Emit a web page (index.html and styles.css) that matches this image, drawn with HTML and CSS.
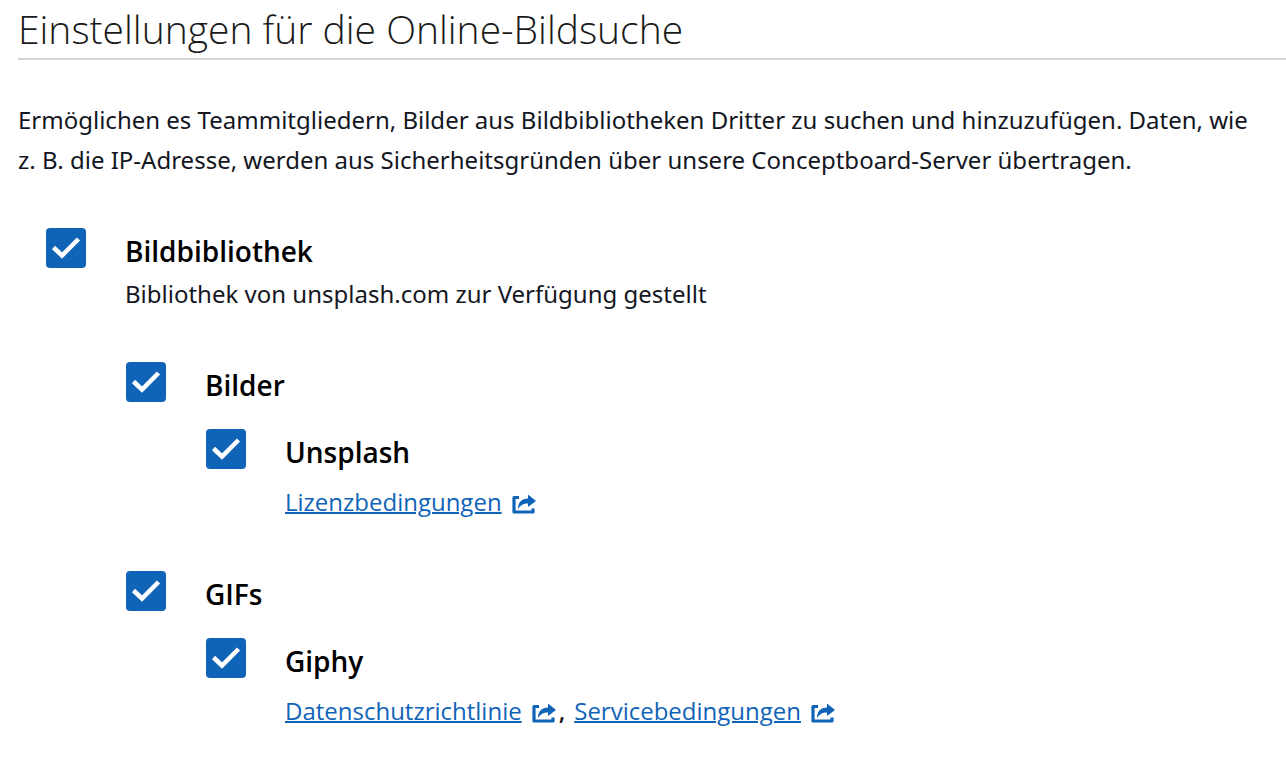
FILE: index.html
```html
<!DOCTYPE html>
<html lang="de">
<head>
<meta charset="utf-8">
<title>Einstellungen für die Online-Bildsuche</title>
<link rel="stylesheet" href="styles.css">
</head>
<body>
<svg class="sprite" aria-hidden="true">
  <symbol id="external" viewBox="0 0 24 20">
    <path d="M7 3.500H2V18H21V14.500" fill="none" stroke="currentColor" stroke-width="3.200" stroke-linejoin="round"/>
    <path d="M16 0.500L24 7L16 13V9.500C11 9.500 9 11 6 15C6 8 10 4.500 16 4.500Z" fill="currentColor"/>
  </symbol>
</svg>
<main class="settings">
  <h1 class="title">Einstellungen für die Online-Bildsuche</h1>
  <p class="intro">Ermöglichen es Teammitgliedern, Bilder aus Bildbibliotheken Dritter zu suchen und hinzuzufügen. Daten, wie z.&nbsp;B. die IP-Adresse, werden aus Sicherheitsgründen über unsere Conceptboard-Server übertragen.</p>
  <div class="options">
    <div class="option">
      <input class="check" type="checkbox" id="library" checked>
      <div class="content">
        <label class="label" for="library">Bildbibliothek</label>
        <p class="hint">Bibliothek von unsplash.com zur Verfügung gestellt</p>
      </div>
    </div>
    <div class="group">
      <div class="option">
        <input class="check" type="checkbox" id="images" checked>
        <label class="label" for="images">Bilder</label>
      </div>
      <div class="option nested">
        <input class="check" type="checkbox" id="unsplash" checked>
        <div class="content">
          <label class="label" for="unsplash">Unsplash</label>
          <p class="links"><a class="link" href="#">Lizenzbedingungen</a><svg class="icon" aria-hidden="true"><use href="#external"/></svg></p>
        </div>
      </div>
    </div>
    <div class="group">
      <div class="option">
        <input class="check" type="checkbox" id="gifs" checked>
        <label class="label" for="gifs">GIFs</label>
      </div>
      <div class="option nested">
        <input class="check" type="checkbox" id="giphy" checked>
        <div class="content">
          <label class="label" for="giphy">Giphy</label>
          <p class="links"><a class="link" href="#">Datenschutzrichtlinie</a><svg class="icon" aria-hidden="true"><use href="#external"/></svg><span class="comma">,</span><a class="link" href="#">Servicebedingungen</a><svg class="icon" aria-hidden="true"><use href="#external"/></svg></p>
        </div>
      </div>
    </div>
  </div>
</main>
</body>
</html>
```
FILE: styles.css
```css
body {
  margin: 0;
  background: #fff;
  color: #14171f;
  font-family: "Open Sans", sans-serif;
  font-size: 24px;
  font-weight: 400;
}
.sprite {
  display: none;
}
.settings {
  padding: 0 0 40px 18px;
}
.title {
  margin: 0;
  padding: 1px 0;
  border-bottom: 2px solid #d4d4d4;
  color: #1a1a1a;
  font-size: 39px;
  line-height: 56px;
  font-weight: 300;
}
.intro,
.hint {
  font-family: "Noto Sans", "Open Sans", sans-serif;
  font-weight: 450;
  line-height: 40px;
}
.intro {
  margin: 40px 18px 0 0;
}
.options {
  margin: 48px 0 0 28px;
}
.option {
  display: flex;
  align-items: flex-start;
  gap: 39px;
}
.check {
  appearance: none;
  flex: none;
  width: 40px;
  height: 40px;
  margin: 0;
  border-radius: 4px;
  background: #1064b8 url("data:image/svg+xml,%3Csvg xmlns='http://www.w3.org/2000/svg' viewBox='0 0 40 40'%3E%3Cpath d='M7.500 19.500L16 27.500L32.500 11' fill='none' stroke='white' stroke-width='4.500'/%3E%3C/svg%3E");
}
.label {
  display: block;
  padding: 3px 0 1px;
  color: #000;
  font-size: 28px;
  line-height: 40px;
  font-weight: 600;
}
.hint {
  margin: 2px 0 0;
}
.group {
  margin: 48px 0 0 80px;
}
.nested {
  margin: 23px 0 0 80px;
}
.links {
  display: flex;
  align-items: center;
  margin: 9px 0 1px;
  line-height: 40px;
}
.link {
  color: #1064b8;
  text-decoration-thickness: 2px;
}
.icon {
  width: 24px;
  height: 20px;
  margin-top: 4px;
  margin-left: 10px;
  color: #1064b8;
}
.comma {
  margin: 0 9px 0 3px;
  font-weight: 600;
}
```
